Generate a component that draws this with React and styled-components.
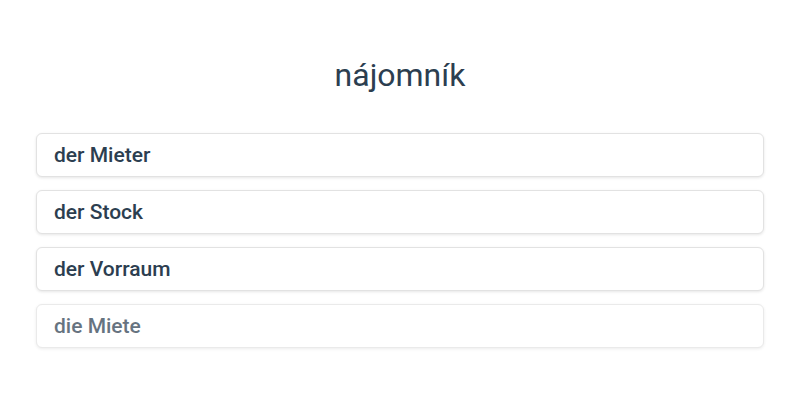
import React from "react";
import styled, { createGlobalStyle } from "styled-components";

const Global = createGlobalStyle`
  html, body { margin: 0; padding: 0; background: #ffffff; }
  body { font-family: Roboto, "Noto Sans", Arial, sans-serif; }
`;

const Page = styled.div`
  width: 800px;
  height: 400px;
  box-sizing: border-box;
  padding: 52px 36px 0;
  display: flex;
  flex-direction: column;
`;

const Title = styled.h1`
  margin: 0 0 35px;
  text-align: center;
  font-size: 32px;
  line-height: 46px;
  font-weight: 400;
  color: #2c3e50;
`;

const List = styled.div`
  display: flex;
  flex-direction: column;
  gap: 13px;
`;

const Option = styled.button`
  display: flex;
  align-items: center;
  height: 44px;
  box-sizing: border-box;
  padding: 0 17px;
  border: 1px solid #e2e2e2;
  border-radius: 6px;
  background: #fff;
  box-shadow: 0 1px 3px rgba(0, 0, 0, 0.1);
  font-family: Roboto, "Noto Sans", Arial, sans-serif;
  font-size: 21px;
  font-weight: 500;
  color: #2c3e50;
  text-align: left;
  cursor: pointer;
  opacity: ${(p) => (p.$faded ? 0.72 : 1)};
`;

const options = ["der Mieter", "der Stock", "der Vorraum", "die Miete"];

export default function App() {
  return (
    <>
      <Global />
      <Page>
        <Title>nájomník</Title>
        <List>
          {options.map((o, i) => (
            <Option key={o} $faded={i === 3}>{o}</Option>
          ))}
        </List>
      </Page>
    </>
  );
}
